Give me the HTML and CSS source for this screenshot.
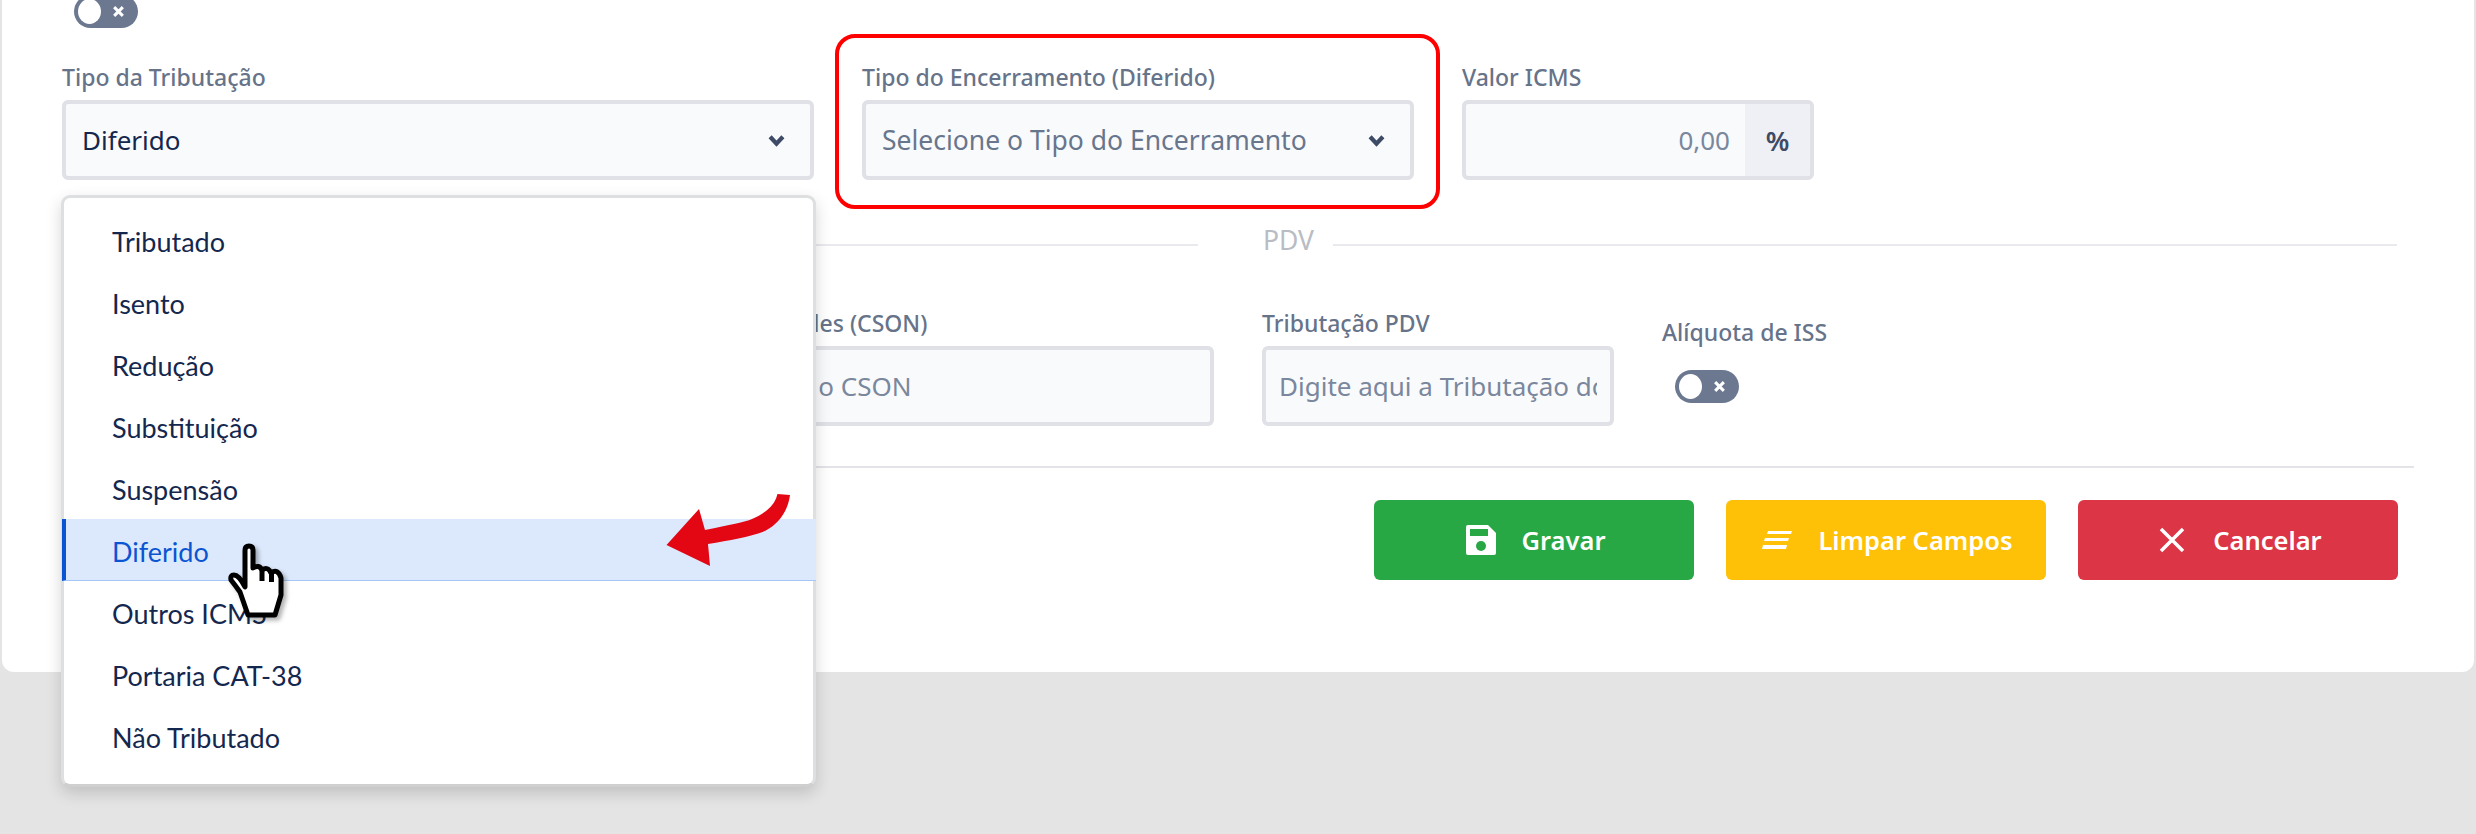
FILE: index.html
```html
<!DOCTYPE html>
<html lang="pt-BR">
<head>
<meta charset="utf-8">
<title>Tributação</title>
<link rel="stylesheet" href="styles.css">
</head>
<body>
<main class="card">
  <div class="toggle toggle-top"><span class="knob"></span><svg class="toggle-x" viewBox="0 0 12 12"><path d="M2 2l8 8M10 2l-8 8"/></svg></div>

  <div class="row row-fiscal">
    <div class="field">
      <label class="label">Tipo da Tributação</label>
      <div class="control select"><span class="value">Diferido</span>
        <svg class="chevron" viewBox="0 0 16 12"><path d="M2 2.500 8 9l6-6.500"/></svg></div>
    </div>
    <div class="field">
      <label class="label">Tipo do Encerramento (Diferido)</label>
      <div class="control select"><span class="value muted">Selecione o Tipo do Encerramento</span>
        <svg class="chevron" viewBox="0 0 16 12"><path d="M2 2.500 8 9l6-6.500"/></svg></div>
    </div>
    <div class="field">
      <label class="label">Valor ICMS</label>
      <div class="control group">
        <input class="input right" placeholder="0,00">
        <span class="addon">%</span>
      </div>
    </div>
  </div>

  <div class="divider"><span class="line line-start"></span><span class="divider-text">PDV</span><span class="line"></span></div>

  <div class="row row-pdv">
    <div class="field">
      <label class="label">Tributos Simples (CSON)</label>
      <div class="control"><input class="input" placeholder="Digite aqui o CSON"></div>
    </div>
    <div class="field">
      <label class="label">Tributação PDV</label>
      <div class="control"><input class="input" placeholder="Digite aqui a Tributação do PDV"></div>
    </div>
    <div class="field field-switch">
      <label class="label">Alíquota de ISS</label>
      <div class="toggle"><span class="knob"></span><svg class="toggle-x" viewBox="0 0 12 12"><path d="M2 2l8 8M10 2l-8 8"/></svg></div>
    </div>
  </div>

  <hr class="rule">

  <div class="actions">
    <button class="btn green">
      <svg class="icon" viewBox="0 0 30 30"><path class="solid" d="M2 0h20l8 8v20a2 2 0 0 1-2 2H2a2 2 0 0 1-2-2V2a2 2 0 0 1 2-2z"/><rect class="hole-green" x="4" y="4" width="18" height="7"/><circle class="hole-green" cx="15" cy="21" r="5"/></svg>
      Gravar</button>
    <button class="btn yellow">
      <svg class="icon" viewBox="0 0 30 30"><path class="solid" d="M6 6h24l-1 3H5zM3 13h24l-1 3H2zM1 20h24l-1 4H0z"/></svg>
      Limpar Campos</button>
    <button class="btn red">
      <svg class="icon" viewBox="0 0 30 30"><path class="stroke" d="M4 4l22 22M26 4 4 26"/></svg>
      Cancelar</button>
  </div>
</main>

<ul class="menu">
  <li class="menu-item">Tributado</li>
  <li class="menu-item">Isento</li>
  <li class="menu-item">Redução</li>
  <li class="menu-item">Substituição</li>
  <li class="menu-item">Suspensão</li>
  <li class="menu-item active">Diferido</li>
  <li class="menu-item">Outros ICMS</li>
  <li class="menu-item">Portaria CAT-38</li>
  <li class="menu-item">Não Tributado</li>
</ul>

<svg class="arrow" viewBox="660 490 135 80"><path d="M666.500 545 699 509l6 21c25-5 40-8 47-11 14-6 23-14 25.500-25l12.500 1c-2 15-10 28-25 36-15 6-35 9-57 13l2 22z"/></svg>

<svg class="hand" viewBox="224 540 66 82"><path d="M245 587V550q0-4 4-4t4 4v18q6-4 9 2 6-4 9 3 7-5 10 5v17l-6 20h-27l-8-23q-5-7-9-12-1-5 3-5 5 0 11 12z"/><path d="M262 570v11M271.500 573v9"/></svg>

<div class="callout"></div>
</body>
</html>
```
FILE: styles.css
```css
* { box-sizing: border-box; }
html, body { margin: 0; height: 834px; overflow: hidden; }
body {
  position: relative;
  background: #e4e4e4;
  font-family: "Noto Sans", "Open Sans", sans-serif;
  padding: 0 2px;
}
.card {
  height: 672px;
  background: #fff;
  border-radius: 0 0 12px 12px;
  padding: 0 60px;
  overflow: hidden;
}
.toggle {
  position: relative;
  width: 64px;
  height: 33px;
  border-radius: 17px;
  background: #6b788f;
}
.toggle-top { margin: -5px 0 0 12px; }
.knob {
  position: absolute;
  left: 4px;
  top: 4px;
  width: 23px;
  height: 25px;
  border-radius: 50%;
  background: #fff;
}
.toggle-x {
  position: absolute;
  left: 38px;
  top: 10px;
  width: 13px;
  height: 13px;
}
.toggle-x path { fill: none; stroke: #fff; stroke-width: 2.800; }
.row { display: grid; column-gap: 48px; }
.row-fiscal { margin-top: 35px; grid-template-columns: 752px 552px 352px; }
.row-pdv { grid-template-columns: 552px 352px 300px; margin-top: 48px; margin-left: 600px; }
.label {
  display: block;
  height: 30px;
  margin-bottom: 7px;
  font-size: 23px;
  font-weight: 500;
  line-height: 28px;
  color: #667389;
  white-space: nowrap;
}
.control {
  display: flex;
  align-items: center;
  height: 80px;
  border: 4px solid #dfe1e7;
  border-radius: 6px;
  background: #f9fafc;
  overflow: hidden;
}
.select { justify-content: space-between; padding: 0 25px 0 16px; }
.value { font-size: 26px; color: #14274e; white-space: nowrap; }
.muted { font-size: 26.500px; color: #68768d; }
.chevron { width: 17px; height: 13px; flex: none; }
.chevron path { fill: none; stroke: #3d4b66; stroke-width: 4; }
.input {
  flex: 1;
  min-width: 0;
  width: 100%;
  height: 100%;
  padding: 0 13px;
  border: 0;
  outline: 0;
  background: transparent;
  font: 26px "Noto Sans", "Open Sans", sans-serif;
  color: #14274e;
}
.input::placeholder { color: #7a879c; opacity: 1; }
.right { text-align: right; }
.group .input { padding-right: 15px; }
.addon {
  flex: none;
  align-self: stretch;
  width: 65px;
  display: flex;
  align-items: center;
  justify-content: center;
  background: #eff0f5;
  font-size: 27px;
  font-weight: 600;
  color: #3d4b66;
}
.divider {
  display: flex;
  align-items: center;
  height: 32px;
  margin: 49px 17px 0 0;
}
.line { flex: 1; height: 2px; background: #e9eaee; }
.line-start { flex: 0 0 1136px; }
.divider-text {
  padding: 0 19px 10px 65px;
  font-size: 26.500px;
  line-height: 32px;
  color: #b9bcc3;
}
.field-switch { padding-top: 9px; }
.field-switch .label { margin-bottom: 22px; }
.field-switch .toggle { margin-left: 13px; }
.rule { height: 2px; margin: 40px 0 0; border: 0; background: #e3e4e8; }
.actions {
  display: flex;
  justify-content: flex-end;
  gap: 32px;
  margin: 32px 16px 0 0;
}
.btn {
  display: flex;
  align-items: center;
  justify-content: center;
  gap: 26px;
  width: 320px;
  height: 80px;
  padding: 0 0 0 3px;
  border: 0;
  border-radius: 6px;
  font: 600 25.500px "Noto Sans", "Open Sans", sans-serif;
  color: #fff;
}
.green { background: #28a745; }
.yellow { background: #ffc107; }
.red { background: #dc3545; }
.icon { width: 30px; height: 30px; flex: none; }
.solid { fill: #fff; }
.hole-green { fill: #28a745; }
.stroke { fill: none; stroke: #fff; stroke-width: 3.500; }
.menu {
  position: absolute;
  left: 61px;
  top: 195px;
  width: 755px;
  height: 592px;
  margin: 0;
  padding: 11px 0 0;
  list-style: none;
  background: #fff;
  border: 3px solid #dedfe1;
  border-bottom-color: #cfcfcf;
  border-radius: 9px;
  box-shadow: 0 6px 16px rgba(0, 0, 0, 0.16);
}
.menu-item {
  height: 62px;
  padding: 4px 0 0 48px;
  font-family: "Lato", sans-serif;
  font-size: 27px;
  line-height: 58px;
  color: #14274e;
}
.active {
  margin-left: -2px;
  margin-right: -3px;
  padding-left: 46px;
  border-left: 4px solid #0b55d3;
  border-bottom: 1px solid #a3c8f7;
  background: #dce9fc;
  color: #0b55d3;
}
.arrow {
  position: absolute;
  left: 660px;
  top: 490px;
  width: 135px;
  height: 80px;
}
.arrow path { fill: #e30613; }
.hand {
  position: absolute;
  left: 224px;
  top: 540px;
  width: 66px;
  height: 82px;
  overflow: visible;
  filter: drop-shadow(3px 3px 2px rgba(0, 0, 0, 0.3));
}
.hand path { fill: #fff; stroke: #000; stroke-width: 5; stroke-linejoin: round; }
.callout {
  position: absolute;
  left: 835px;
  top: 34px;
  width: 605px;
  height: 175px;
  border: 4px solid #f00;
  border-radius: 20px;
}
```
